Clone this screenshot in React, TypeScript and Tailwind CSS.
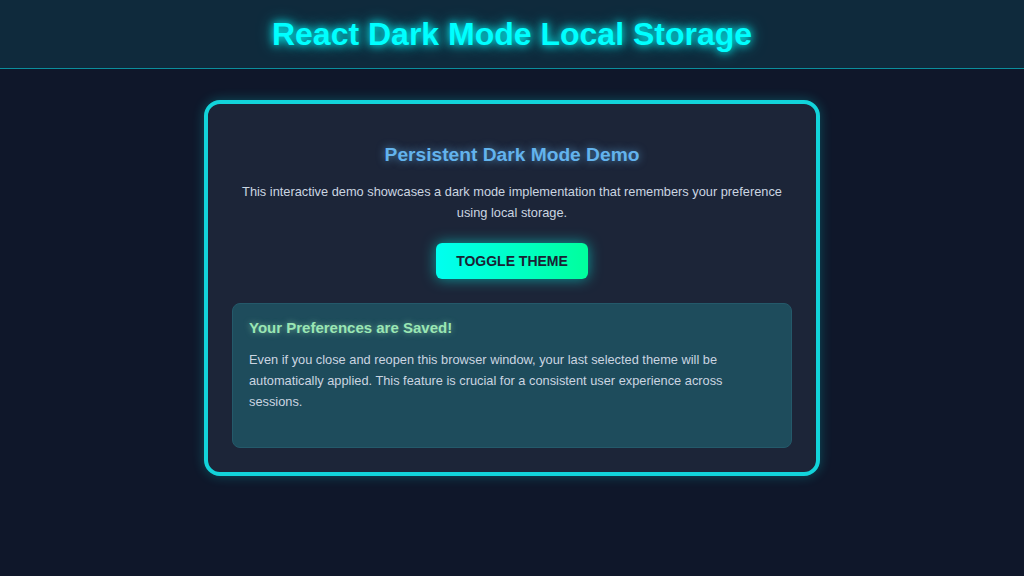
import React, { useState } from "react";

export default function App() {
    const [dark, setDark] = useState(true);
    return (
        <div className="min-h-screen bg-[#0f172a] font-['Liberation_Sans',Arial,sans-serif]">
            <header className="h-[69px] bg-[#0f2a3c] border-b border-[#0b8e9c] flex items-center justify-center">
                <h1 className="text-[32px] font-bold text-[#00ffff] leading-none [text-shadow:0_0_8px_#00ffff,0_0_16px_rgba(0,255,255,0.6)]">
                    React Dark Mode Local Storage
                </h1>
            </header>

            <main className="flex justify-center pt-[31px]">
                <div className="w-[616px] rounded-2xl border-4 border-[#12d4db] bg-[#1c2538] px-6 pt-[37px] pb-6 shadow-[0_0_12px_rgba(0,212,216,0.3)]">
                    <h2 className="text-center text-[19.2px] font-bold leading-7 text-[#63b3ed] [text-shadow:0_0_8px_rgba(99,179,237,0.7)]">
                        Persistent Dark Mode Demo
                    </h2>
                    <p className="mt-3 text-center text-[12.8px] leading-[21px] text-[#cbd5e1]">
                        This interactive demo showcases a dark mode implementation that remembers your preference using local storage.
                    </p>

                    <div className="mt-5 flex justify-center">
                        <button
                            onClick={() => setDark(!dark)}
                            className="rounded-md bg-gradient-to-r from-[#00fff0] to-[#00ff9c] px-5 py-2 text-sm font-bold uppercase text-[#1a2234] shadow-[0_0_14px_rgba(0,255,240,0.55)]"
                        >
                            Toggle Theme
                        </button>
                    </div>

                    {/* saved notice */}
                    <div className="mt-6 rounded-lg border border-[#24596a] bg-[#1e4c5c] px-4 pt-[14px] pb-[35px]">
                        <h3 className="text-[15px] font-bold leading-5 text-[#9ae6b4] [text-shadow:0_0_6px_rgba(154,230,180,0.6)]">
                            Your Preferences are Saved!
                        </h3>
                        <p className="mt-[11px] text-[12.8px] leading-[21px] text-[#cbd5e1]">
                            Even if you close and reopen this browser window, your last selected theme will be automatically applied. This feature is crucial for a consistent user experience across sessions.
                        </p>
                    </div>
                </div>
            </main>
        </div>
    );
}
